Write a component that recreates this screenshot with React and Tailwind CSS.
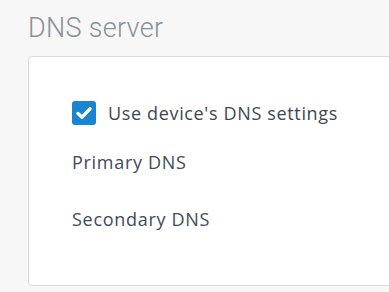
import React from "react"

export default function App() {
  return (
    <div className="w-[389px] h-[292px] overflow-hidden bg-[#f7f7f7] pl-[28px] pt-[10px]">
      <h2 className="text-[27px] leading-[36px] font-light tracking-[0.3px] text-[#87919a]" style={{ fontFamily: "Roboto, sans-serif" }}>DNS server</h2>
      <div className="mt-[10px] w-[400px] h-[230px] bg-white border border-[#dadada] rounded-[4px] pl-[43px] pt-[44px]" style={{ fontFamily: "'Open Sans', 'Noto Sans', sans-serif" }}>
        <label className="flex items-center gap-[12px]">
          <span className="w-[24px] h-[24px] rounded-[3px] bg-[#1a84cf] flex items-center justify-center">
            <svg width="18" height="18" viewBox="0 0 18 18" fill="none">
              <path d="M3 9.5 L7 13.2 L15 4.8" stroke="white" strokeWidth="3.4" strokeLinecap="round" strokeLinejoin="round" />
            </svg>
          </span>
          <span className="text-[18px] leading-[24px] tracking-[0.65px] text-[#3d4751]">Use device's DNS settings</span>
        </label>
        <div className="mt-[25px] text-[18px] leading-[24px] tracking-[0.7px] text-[#3d4b59]">Primary DNS</div>
        <div className="mt-[33px] text-[18px] leading-[24px] tracking-[0.7px] text-[#3d4b59]">Secondary DNS</div>
      </div>
    </div>
  )
}
